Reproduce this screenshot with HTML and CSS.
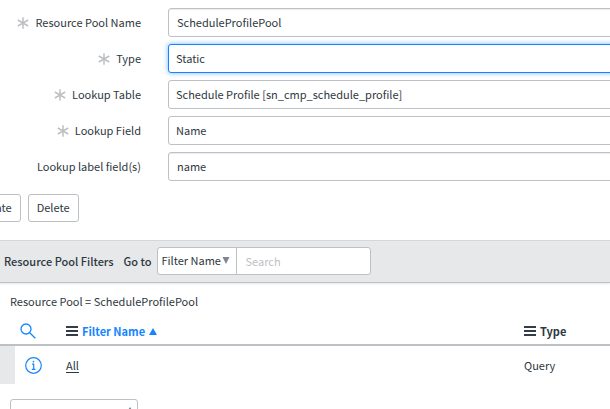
FILE: index.html
```html
<!DOCTYPE html>
<html lang="en">
<head>
    <meta charset="UTF-8">
    <meta name="viewport" content="width=device-width, initial-scale=1.0">
    <title>Resource Pool</title>
    <link rel="stylesheet" href="styles.css">
</head>
<body>
    <!-- Shared icons -->
    <svg class="sprite" aria-hidden="true">
        <symbol id="required" viewBox="0 0 12 12">
            <path d="M6 0.3V11.7M0.8 3L11.2 9M11.2 3L0.8 9" fill="none" stroke="#bdc0c4" stroke-width="1.5"/>
        </symbol>
        <symbol id="menu" viewBox="0 0 12 10">
            <path d="M0 1H12M0 5H12M0 9H12" fill="none" stroke="#343d47" stroke-width="1.8"/>
        </symbol>
    </svg>

    <form class="pool-form">
        <div class="field">
            <label for="poolName"><svg class="required"><use href="#required"/></svg>Resource Pool Name</label>
            <input class="control" id="poolName" type="text" value="ScheduleProfilePool">
        </div>
        <div class="field">
            <label for="poolType"><svg class="required"><use href="#required"/></svg>Type</label>
            <select class="control active" id="poolType">
                <option>Static</option>
            </select>
        </div>
        <div class="field">
            <label for="lookupTable"><svg class="required"><use href="#required"/></svg>Lookup Table</label>
            <select class="control" id="lookupTable">
                <option>Schedule Profile [sn_cmp_schedule_profile]</option>
            </select>
        </div>
        <div class="field">
            <label for="lookupField"><svg class="required"><use href="#required"/></svg>Lookup Field</label>
            <select class="control" id="lookupField">
                <option>Name</option>
            </select>
        </div>
        <div class="field">
            <label for="labelFields">Lookup label field(s)</label>
            <input class="control" id="labelFields" type="text" value="name">
        </div>
        <div class="buttons">
            <button type="button">Update</button>
            <button type="button">Delete</button>
        </div>
    </form>

    <div class="list-bar">
        <h2>Resource Pool Filters</h2>
        <label for="goTo">Go to</label>
        <div class="search-group">
            <div class="select-wrap">
                <select id="goTo">
                    <option>Filter Name</option>
                </select>
                <svg class="arrow" viewBox="0 0 8 7"><path d="M0.5 0H7.5L4 7Z" fill="#818791"/></svg>
            </div>
            <input type="search" placeholder="Search" aria-label="Search">
        </div>
    </div>

    <p class="breadcrumb">Resource Pool = ScheduleProfilePool</p>

    <table class="filters">
        <thead>
            <tr>
                <th class="mark"></th>
                <th class="icon-col">
                    <button class="icon-button" type="button" aria-label="Search list">
                        <svg class="search" viewBox="0 0 16 16"><path d="M11 6A5 5 0 1 1 1 6A5 5 0 0 1 11 6ZM9.7 9.7L15.3 15.3" fill="none" stroke="#1485ff" stroke-width="1.3"/></svg>
                    </button>
                </th>
                <th>
                    <a class="heading sorted" href="#">
                        <svg class="menu"><use href="#menu"/></svg>Filter Name
                        <svg class="sort" viewBox="0 0 8 7"><path d="M0 7H8L4 0Z" fill="#1485ff"/></svg>
                    </a>
                </th>
                <th class="type-col">
                    <a class="heading" href="#"><svg class="menu"><use href="#menu"/></svg>Type</a>
                </th>
            </tr>
        </thead>
        <tbody>
            <tr>
                <td class="mark"></td>
                <td class="icon-col">
                    <button class="icon-button" type="button" aria-label="Preview record">
                        <svg class="info" viewBox="0 0 17 17"><circle cx="8.5" cy="8.5" r="7.8" fill="none" stroke="#1485ff" stroke-width="1.2"/><path d="M7 7.2H8.7V12.2M6.8 12.4H10.4" fill="none" stroke="#1485ff" stroke-width="1.2"/><circle cx="8.5" cy="4.6" r="0.9" fill="#1485ff"/></svg>
                    </button>
                </td>
                <td><a class="record" href="#">All</a></td>
                <td class="type-col">Query</td>
            </tr>
        </tbody>
    </table>

    <div class="select-wrap actions">
        <select aria-label="Actions on selected rows">
            <option>Actions on rows</option>
        </select>
        <svg class="arrow" viewBox="0 0 6 12"><path d="M0 4.5L3 0L6 4.5ZM0 7.5L3 12L6 7.5Z" fill="#818791"/></svg>
    </div>
</body>
</html>
```

FILE: styles.css
```css
body {
    margin: 0;
    overflow: hidden;
    background: white;
    color: #2e3740;
    font-family: "Noto Sans CJK SC", "Noto Sans", sans-serif;
    font-size: 11px;
    line-height: 17px;
}
input, select, button {
    box-sizing: border-box;
    height: 28px;
    margin: 0;
    padding: 0 8px 1px;
    border: 1px solid #bdc0c4;
    border-radius: 3px;
    background: white;
    color: #2e3740;
    font: inherit;
    appearance: none;
}
button {
    cursor: pointer;
}
svg {
    flex: none;
}
.sprite {
    display: none;
}

/* Form */
.pool-form {
    display: flex;
    flex-direction: column;
    gap: 7px;
    padding-top: 8px;
}
.field {
    display: flex;
    align-items: center;
    gap: 27px;
    /* controls run on past the visible area */
    margin-right: -16px;
}
.field label {
    display: flex;
    align-items: center;
    justify-content: flex-end;
    gap: 6px;
    width: 141px;
}
.required {
    width: 12px;
    height: 12px;
}
.control {
    flex: 1;
    min-width: 0;
    height: 29px;
    box-shadow: inset 0 1px 1px rgba(0, 0, 0, 0.08);
}
select.control {
    padding-left: 7px;
    box-shadow: none;
}
select.active {
    border-color: #1485ff;
    box-shadow: 0 0 5px rgba(20, 133, 255, 0.6);
}
.buttons {
    display: flex;
    gap: 7px;
    margin: 6px 0 18px -35px;
}

/* List header */
.list-bar {
    display: flex;
    align-items: center;
    padding: 6px 4px 7px;
    border-top: 1px solid #d4d6d9;
    border-bottom: 1px solid #bdc0c4;
    background: #e6e8ea;
    box-shadow: 0 1px 2px rgba(0, 0, 0, 0.1);
}
.list-bar h2 {
    margin: 0 10px 0 0;
    font-size: 11px;
    font-weight: 500;
}
.list-bar label {
    margin-right: 6px;
    font-weight: 500;
}
.search-group {
    display: flex;
}
.select-wrap {
    position: relative;
}
.select-wrap select {
    width: 80px;
    padding: 0 3px 1px;
    border-radius: 3px 0 0 3px;
}
.arrow {
    position: absolute;
    top: 10px;
    right: 7px;
    width: 8px;
    height: 7px;
    pointer-events: none;
}
.search-group input {
    width: 135px;
    margin-left: -1px;
    border-radius: 0 3px 3px 0;
}
.search-group input::placeholder {
    color: #bdc0c4;
}
.breadcrumb {
    margin: 10px 10px 8px;
}

/* Filter list */
.filters {
    width: 100%;
    border-collapse: collapse;
    table-layout: fixed;
}
.filters th, .filters td {
    padding: 0;
    text-align: left;
}
.filters th {
    height: 26px;
    border-bottom: 2px solid #bdc0c4;
    font-weight: 700;
}
.filters td {
    height: 38px;
}
.filters .mark {
    width: 15px;
}
.filters td.mark {
    background: #e6e8ea;
}
.filters .icon-col {
    width: 51px;
}
.filters .type-col {
    width: 86px;
}
.icon-button {
    display: flex;
    align-items: center;
    height: 24px;
    padding: 0 5px;
    border: 0;
    background: none;
}
td .icon-button {
    padding: 0 10px;
}
.search {
    width: 16px;
    height: 16px;
}
.info {
    width: 17px;
    height: 17px;
}
.heading {
    display: flex;
    align-items: center;
    gap: 4px;
    color: #2e3740;
    text-decoration: none;
}
.sorted {
    color: #1485ff;
}
.menu {
    width: 12px;
    height: 10px;
}
.sort {
    width: 8px;
    height: 7px;
}
.record {
    color: #2e3740;
    text-underline-offset: 2px;
}

/* Row actions */
.actions {
    width: 128px;
    margin: 15px 10px;
}
.actions select {
    width: 100%;
    padding: 2px 8px 0;
    border-radius: 3px;
}
.actions .arrow {
    top: 8px;
    right: 5px;
    width: 6px;
    height: 12px;
}
```
